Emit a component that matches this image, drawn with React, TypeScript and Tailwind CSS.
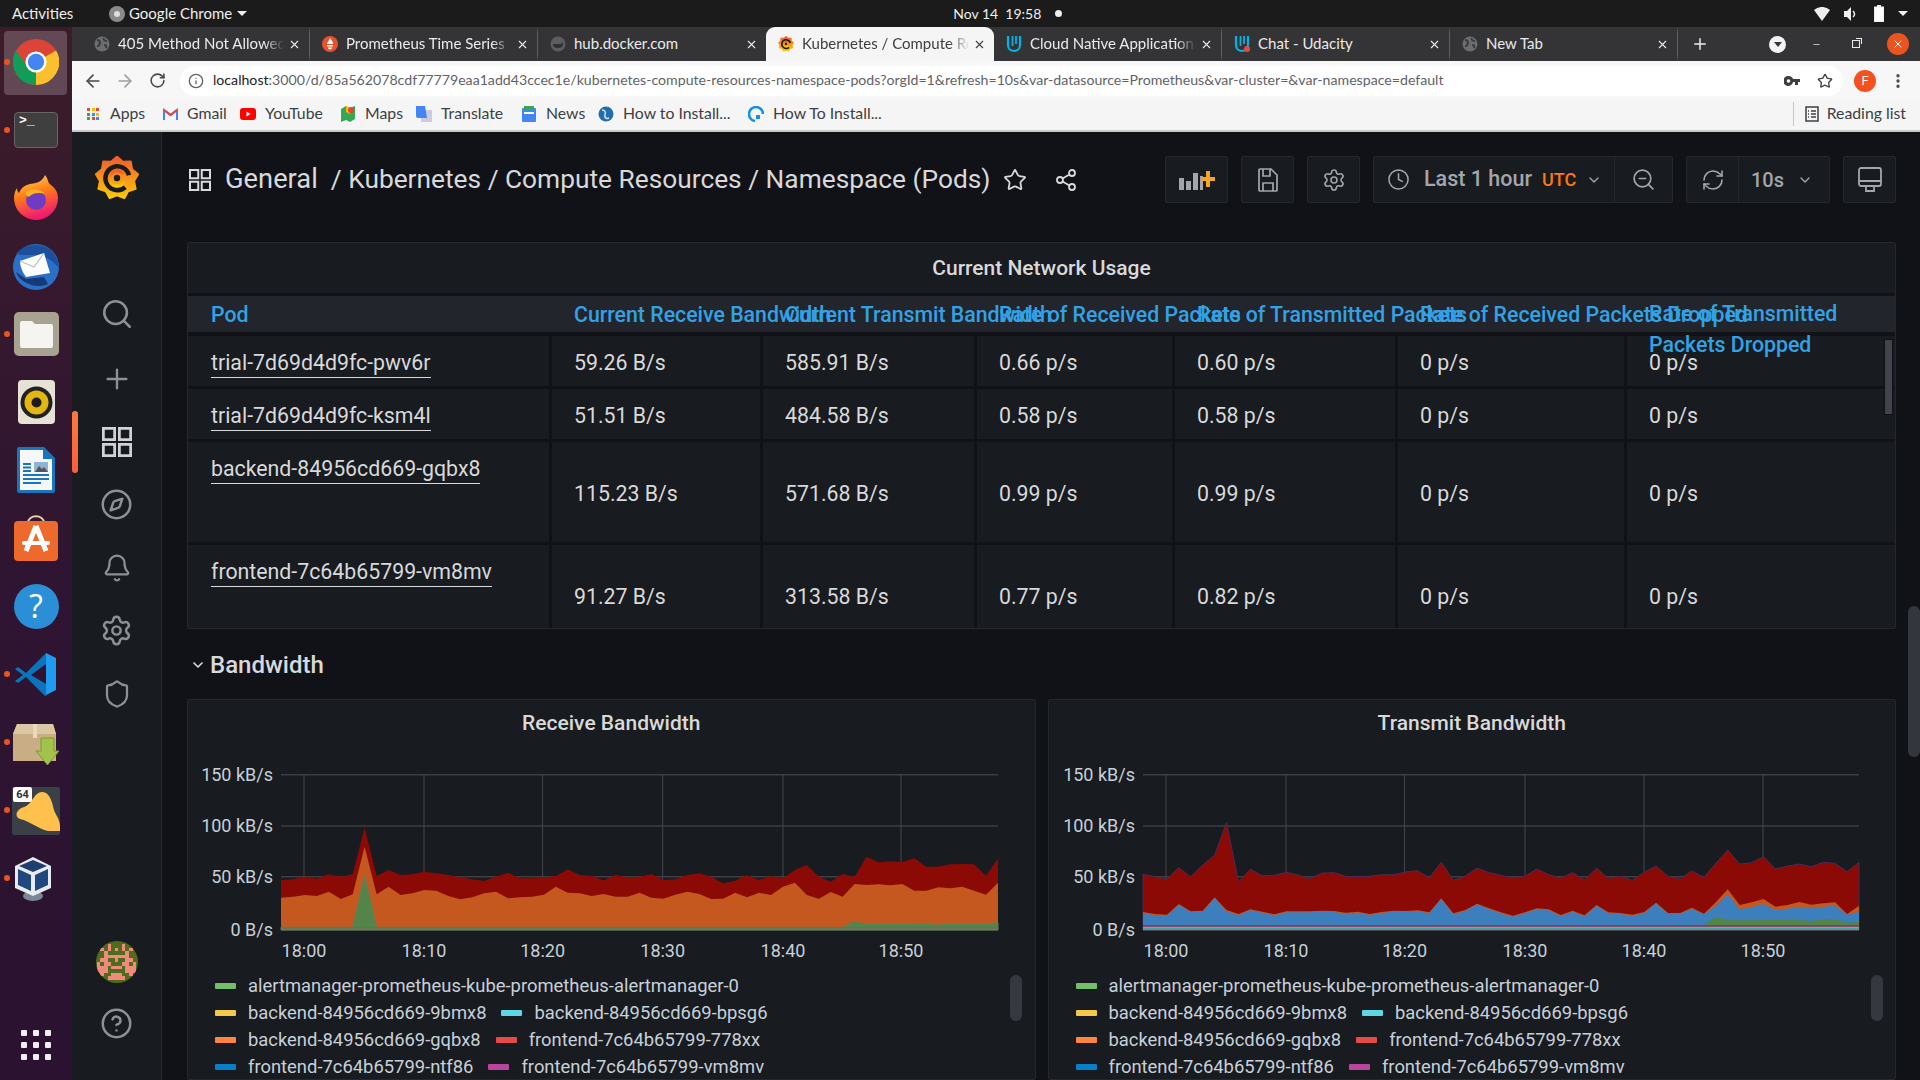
import type { ReactNode } from 'react';
import {
  ArrowLeft, ArrowRight, Bell, ChevronDown, CircleHelp, Clock, Compass, EllipsisVertical, Info,
  Minus, Plus, RefreshCw, RotateCw, Search, Settings, Share2, Shield, Star, X, ZoomOut,
} from 'lucide-react';

// chart values are read off the screenshot, in px from the top of the plot strip
const rxTop = [420,418,410,416,403,410,403,262,408,390,405,403,395,400,405,412,418,423,410,398,415,415,412,408,388,405,408,421,405,412,410,402,420,418,405,400,410,430,422,405,420,408,415,390,375,410,425,402,410,350,367,364,366,355,380,380,373,372,373,407,355];
const rxOrange = [473,470,465,468,455,477,463,320,463,440,465,460,450,452,468,478,472,460,455,475,472,470,464,440,458,460,468,462,470,470,458,473,476,464,455,462,477,476,458,472,458,465,440,428,465,476,456,470,432,435,433,436,432,452,452,442,445,440,452,464,428];
const rxGreenTail = [545,552,552,552,552,551,551,555,550,552,552,552,548];
const rxGreen = Array.from({ length: 61 }, (_, i) => (i === 7 ? 405 : i < 48 ? 562 : rxGreenTail[i - 48]));
const txTop = [403,410,417,383,410,375,346,248,425,388,407,406,397,405,416,399,398,409,410,409,404,404,396,392,413,367,421,408,384,398,406,414,408,387,404,414,398,419,385,415,409,421,397,378,409,416,393,412,370,330,372,368,350,387,378,372,380,367,370,395,367];
const txOrange = [516,522,524,492,514,512,472,510,522,508,515,523,514,514,514,512,513,518,515,522,516,512,513,511,517,475,520,510,491,505,517,527,517,505,508,525,512,526,495,517,519,524,516,488,519,519,503,521,487,448,495,487,477,500,495,486,494,490,487,522,497];
const txBlue = [520,526,527,494,516,516,474,514,526,510,518,526,517,517,517,515,516,521,518,525,519,515,516,514,520,477,523,513,493,508,520,530,520,507,511,528,515,529,497,519,522,527,519,490,521,521,506,523,497,462,508,502,492,510,506,500,505,500,497,524,515];
const txGreenTail = [530,540,541,541,540,539,539,540,543,538,538,548,546];
const txGreen = Array.from({ length: 61 }, (_, i) => (i < 48 ? 556 : txGreenTail[i - 48]));

const rows = [
  { pod: 'trial-7d69d4d9fc-pwv6r', h: 'h-[53px]', tall: false, v: ['59.26 B/s', '585.91 B/s', '0.66 p/s', '0.60 p/s', '0 p/s', '0 p/s'] },
  { pod: 'trial-7d69d4d9fc-ksm4l', h: 'h-[53px]', tall: false, v: ['51.51 B/s', '484.58 B/s', '0.58 p/s', '0.58 p/s', '0 p/s', '0 p/s'] },
  { pod: 'backend-84956cd669-gqbx8', h: 'h-[103px]', tall: true, v: ['115.23 B/s', '571.68 B/s', '0.99 p/s', '0.99 p/s', '0 p/s', '0 p/s'] },
  { pod: 'frontend-7c64b65799-vm8mv', h: 'h-[103px]', tall: true, v: ['91.27 B/s', '313.58 B/s', '0.77 p/s', '0.82 p/s', '0 p/s', '0 p/s'] },
];

const headers = ['Current Receive Bandwidth', 'Current Transmit Bandwidth', 'Rate of Received Packets', 'Rate of Transmitted Packets', 'Rate of Received Packets Dropped'];

const legend = [
  { name: 'alertmanager-prometheus-kube-prometheus-alertmanager-0', color: 'bg-[#73bf69]' },
  { name: 'backend-84956cd669-9bmx8', color: 'bg-[#f2c94c]' },
  { name: 'backend-84956cd669-bpsg6', color: 'bg-[#5fd6e4]' },
  { name: 'backend-84956cd669-gqbx8', color: 'bg-[#ff8540]' },
  { name: 'frontend-7c64b65799-778xx', color: 'bg-[#e84a4a]' },
  { name: 'frontend-7c64b65799-ntf86', color: 'bg-[#0a7fc9]' },
  { name: 'frontend-7c64b65799-vm8mv', color: 'bg-[#b9459f]' },
];

const tabs = [
  { title: '405 Method Not Allowed', icon: <GlobeFav />, fade: true },
  { title: 'Prometheus Time Series', icon: <PromFav />, fade: true },
  { title: 'hub.docker.com', icon: <DockerFav /> },
  { title: 'Kubernetes / Compute Resources', icon: <GrafanaLogo size={16} />, active: true, fade: true },
  { title: 'Cloud Native Application', icon: <UdacityFav />, fade: true },
  { title: 'Chat - Udacity', icon: <UdacityFav dot /> },
  { title: 'New Tab', icon: <GlobeFav /> },
];

function GlobeFav() {
  return (
    <svg width="16" height="16" viewBox="0 0 16 16">
      <circle cx="8" cy="8" r="7.5" fill="#6b6d70" />
      <path d="M3 4c2 0 3 1 3 3s-2 2-2 4M10 2c-1 2 1 3 3 3M10 9c2 0 3 1 2 3" stroke="#3a3b3e" strokeWidth="2" fill="none" />
    </svg>
  );
}

function PromFav() {
  return (
    <svg width="16" height="16" viewBox="0 0 16 16">
      <circle cx="8" cy="8" r="8" fill="#e6522c" />
      <path d="M8 2c1 2 3 3 3 6H5c0-2 2-3 3-6zM5 9h6v1.500H5zM6 11.500h4c0 1-1 2-2 2s-2-1-2-2z" fill="#fff" />
    </svg>
  );
}

function DockerFav() {
  return (
    <svg width="16" height="16" viewBox="0 0 16 16">
      <circle cx="8" cy="8" r="7.500" fill="#5b5d60" />
      <path d="M3 8h8c1 0 1-2 2-2v2c0 3-2 4-5 4S3 11 3 8z" fill="#2f3033" />
    </svg>
  );
}

function UdacityFav({ dot }: { dot?: boolean }) {
  return (
    <svg width="16" height="18" viewBox="0 0 16 18">
      <path d="M2 1v9c0 4 3 6 6 6s6-2 6-6V1" stroke="#02b3e4" strokeWidth="2.200" fill="none" />
      <path d="M6.500 1v10M10 1v8" stroke="#02b3e4" strokeWidth="1.800" fill="none" />
      {dot && <circle cx="13" cy="14" r="3" fill="#e84a3c" />}
    </svg>
  );
}

function gearPath(n: number, outer: number, inner: number) {
  const pts: string[] = [];
  for (let i = 0; i < n * 2; i++) {
    const r = i % 2 ? inner : outer;
    const a = (Math.PI * i) / n - Math.PI / 2;
    pts.push(`${(24 + r * Math.cos(a)).toFixed(1)},${(24 + r * Math.sin(a)).toFixed(1)}`);
  }
  return pts.join(' ');
}

function GrafanaLogo({ size }: { size: number }) {
  const id = `grad${size}`;
  return (
    <svg width={size} height={size} viewBox="0 0 48 48">
      <defs>
        <linearGradient id={id} x1="0" y1="0" x2="0" y2="1">
          <stop offset="0" stopColor="#f15b2a" />
          <stop offset="1" stopColor="#fbca0a" />
        </linearGradient>
      </defs>
      <polygon points={gearPath(9, 23.500, 19)} fill={`url(#${id})`} stroke={`url(#${id})`} strokeWidth="2" strokeLinejoin="round" />
      <path d="M37 21a13 13 0 1 0-4 13" stroke="#181b1f" strokeWidth="5" fill="none" />
      <path d="M31 20a8 8 0 1 0 1 7" stroke={`url(#${id})`} strokeWidth="3.500" fill="none" />
      <circle cx="24" cy="24" r="3.500" fill="#181b1f" />
    </svg>
  );
}

function ChromeLogo({ size }: { size: number }) {
  return (
    <svg width={size} height={size} viewBox="0 0 48 48">
      <circle cx="24" cy="24" r="24" fill="#db4437" />
      <path d="M24 24 45 12A24 24 0 0 1 24 48z" fill="#fbc02d" />
      <path d="M24 24 24 48A24 24 0 0 1 3.200 36z" fill="#0f9d58" />
      <path d="M3.200 36A24 24 0 0 1 3 12l12 17z" fill="#0f9d58" />
      <circle cx="24" cy="24" r="11" fill="#fff" />
      <circle cx="24" cy="24" r="8.500" fill="#4285f4" />
    </svg>
  );
}

function Firefox() {
  return (
    <svg width="46" height="46" viewBox="0 0 46 46">
      <defs>
        <linearGradient id="ffx" x1="0" y1="0" x2="0.300" y2="1">
          <stop offset="0" stopColor="#ffe34d" />
          <stop offset="0.500" stopColor="#ff7a1a" />
          <stop offset="1" stopColor="#f01d6d" />
        </linearGradient>
      </defs>
      <path d="M32 0c4 5 2 7 6 10 5 4 7 8 7 13a22 22 0 1 1-44 0c0-4 1-7 3-10 0 3 1 4 2 5 2-5 6-8 11-9 4-1 11 0 15-9z" fill="url(#ffx)" />
      <circle cx="23" cy="25" r="10" fill="#6f3bc2" />
      <path d="M13 17c6-4 15-3 19 2-6-2-12-1-15 2-2 2-5-1-4-4z" fill="#ffb01f" />
    </svg>
  );
}

function Thunderbird() {
  return (
    <svg width="48" height="48" viewBox="0 0 48 48">
      <circle cx="24" cy="25" r="23" fill="#2a70c9" />
      <path d="M4 12C10 3 26 0 36 6c6 4 11 12 11 20-6-8-16-14-28-13-6 0-11 0-15-1z" fill="#1c4f9c" />
      <path d="M8 19 32 11l6 20-24 4C10 30 8 24 8 19z" fill="#fff" />
      <path d="M8 19 22 25 32 11" stroke="#b9c0c8" strokeWidth="1.200" fill="none" />
      <path d="M4 30c3 10 20 18 32 12l-4-7-18 2z" fill="#163a78" />
    </svg>
  );
}

function Files() {
  return (
    <div className="w-[45px] h-[44px] rounded-[5px] bg-[#a8a290] flex items-center justify-center">
      <svg width="33" height="28" viewBox="0 0 33 28">
        <path d="M0 3a2 2 0 0 1 2-2h10l3 3h16a2 2 0 0 1 2 2v20a2 2 0 0 1-2 2H2a2 2 0 0 1-2-2z" fill="#f6f4f0" />
      </svg>
    </div>
  );
}

function Rhythmbox() {
  return (
    <div className="w-[37px] h-[44px] rounded-[4px] bg-[#e6e2d6] flex items-center justify-center">
      <svg width="33" height="33" viewBox="0 0 33 33">
        <circle cx="16.500" cy="16.500" r="16" fill="#222" />
        <circle cx="16.500" cy="16.500" r="12" fill="#e2b714" />
        <circle cx="16.500" cy="16.500" r="5" fill="#1c1c1c" />
      </svg>
    </div>
  );
}

function Writer() {
  return (
    <svg width="38" height="46" viewBox="0 0 38 46">
      <path d="M2 0h25l11 11v33a2 2 0 0 1-2 2H2a2 2 0 0 1-2-2V2a2 2 0 0 1 2-2z" fill="#1b75bb" />
      <path d="M3 3h23v9h9v31H3z" fill="#f5f7f8" />
      <path d="M6 17h8M6 20.500h8M6 24h8M6 28h26M6 32h26M6 36h18" stroke="#1b75bb" strokeWidth="2" />
      <rect x="17" y="15" width="14" height="10" fill="#8fb5d6" />
      <path d="M18 25l4-6 3 3 2-2 4 5z" fill="#555" />
    </svg>
  );
}

function SoftwareBag() {
  return (
    <svg width="46" height="46" viewBox="0 0 46 46">
      <path d="M15 8c0-9 16-9 16 0" stroke="#e9cfa5" strokeWidth="2" fill="none" />
      <rect x="1" y="6" width="44" height="40" rx="4" fill="#ee6a2c" />
      <path d="M23 11 13 36M23 11l10 25" stroke="#fff" strokeWidth="5" />
      <rect x="9" y="26" width="28" height="4" rx="2" fill="#fff" />
    </svg>
  );
}

function HelpBall() {
  return (
    <div className="w-[45px] h-[45px] rounded-full bg-[#2b8fd8] flex items-center justify-center text-white text-[32px] font-['Open_Sans',sans-serif]">?</div>
  );
}

function VSCode() {
  return (
    <svg width="44" height="44" viewBox="0 0 44 44">
      <path d="M32 1 42 6v32l-10 5z" fill="#1f9cf0" />
      <path d="M32 1 12 21 4 15l-3 2 8 6-8 6 3 2 8-6 20 20V32L17 23 32 12z" fill="#0a75bd" />
    </svg>
  );
}

function PackageBox() {
  return (
    <svg width="46" height="42" viewBox="0 0 46 42" className="mt-[5px]">
      <path d="M4 0h36l3 10v27H0V10z" fill="#c9ae85" />
      <path d="M4 0h36l3 10H0z" fill="#dcc7a3" />
      <rect x="20" y="0" width="4" height="14" fill="#ead9bd" />
      <path d="M28 14h13v13h5L34.500 41 23 27h5z" fill="#a3c24a" stroke="#7b9a2c" />
    </svg>
  );
}

function BellApp() {
  return (
    <div className="relative mt-[2px] w-[48px] h-[48px] rounded-[2px] bg-[#3b3f46] overflow-hidden">
      <svg width="48" height="48" viewBox="0 0 48 48">
        <path d="M30 5c6 0 9 6 11 14 1 8 7 12 7 20v5H36C26 42 18 34 8 32 2 30 4 22 12 20 20 18 22 5 30 5z" fill="#ffc04d" />
      </svg>
      <div className="absolute left-[1px] top-0 w-[19px] h-[15px] rounded-[2px] bg-white text-[#333] text-[11px] leading-[15px] font-bold text-center">64</div>
    </div>
  );
}

function VBox() {
  return (
    <svg width="40" height="46" viewBox="0 0 40 46" className="-ml-[6px] mt-[1px]">
      <ellipse cx="20" cy="40" rx="10" ry="5" fill="#7b8796" />
      <path d="M20 1 38 10v22L20 40 2 32V10z" fill="#e8ecf2" />
      <path d="M20 4 34 10 20 16 6 10z" fill="#1d3f70" />
      <path d="M5 13 18 19v16L5 29zM35 13 22 19v16l13-6z" fill="#1f4880" />
    </svg>
  );
}

function DockSlot({ children, dot, active }: { children: ReactNode; dot?: boolean; active?: boolean }) {
  return (
    <div className="relative h-[68px] shrink-0 flex items-center justify-center">
      {active && <div className="absolute left-[4px] top-[3px] w-[63px] h-[64px] rounded-[4px] bg-white/20" />}
      {dot && <div className="absolute left-[4px] top-[31px] w-[6px] h-[6px] rounded-full bg-[#e95420]" />}
      <div className="relative">{children}</div>
    </div>
  );
}

function Dock() {
  return (
    <div className="w-[72px] shrink-0 flex flex-col pt-[1px] bg-gradient-to-b from-[#3c1c29] via-[#2f1531] to-[#2a1230]">
      <DockSlot active dot><ChromeLogo size={46} /></DockSlot>
      <DockSlot dot>
        <div className="w-[44px] h-[36px] rounded-[4px] bg-[#3f3f3f] border border-[#666] text-white text-[13px] leading-[14px] pl-[4px] pt-[1px] font-['Liberation_Mono',monospace] font-bold">&gt;_</div>
      </DockSlot>
      <DockSlot><Firefox /></DockSlot>
      <DockSlot><Thunderbird /></DockSlot>
      <DockSlot dot><Files /></DockSlot>
      <DockSlot><Rhythmbox /></DockSlot>
      <DockSlot><Writer /></DockSlot>
      <DockSlot><SoftwareBag /></DockSlot>
      <DockSlot><HelpBall /></DockSlot>
      <DockSlot dot><VSCode /></DockSlot>
      <DockSlot dot><PackageBox /></DockSlot>
      <DockSlot dot><BellApp /></DockSlot>
      <DockSlot dot><VBox /></DockSlot>
      <div className="mt-auto mb-[20px] mx-auto grid grid-cols-3 gap-x-[6px] gap-y-[6px]">
        {Array.from({ length: 9 }).map((_, i) => (
          <div key={i} className="w-[6px] h-[6px] rounded-[1px] bg-[#f0eeee]" />
        ))}
      </div>
    </div>
  );
}

function TopBar() {
  return (
    <div className="h-[27px] shrink-0 bg-[#1b1b1b] flex items-center text-[#eeeeec] text-[15px] font-['Lato',sans-serif]">
      <span className="ml-[12px] w-[97px]">Activities</span>
      <svg width="16" height="16" viewBox="0 0 16 16"><circle cx="8" cy="8" r="8" fill="#8a8a8a" /><circle cx="8" cy="8" r="3" fill="#ddd" /></svg>
      <span className="ml-[4px]">Google Chrome</span>
      <span className="ml-[5px] w-0 h-0 border-x-[5px] border-x-transparent border-t-[5px] border-t-[#eeeeec]" />
      <span className="ml-[706px] text-[14px]">Nov 14&nbsp;&nbsp;19:58</span>
      <span className="ml-[14px] w-[7px] h-[7px] rounded-full bg-[#eeeeec]" />
      <svg className="ml-[752px]" width="16" height="14" viewBox="0 0 16 14"><path d="M0 3a12 12 0 0 1 16 0L8 14z" fill="#eee" /></svg>
      <svg className="ml-[14px]" width="13" height="14" viewBox="0 0 13 14"><path d="M0 4h3l4-4v14l-4-4H0z" fill="#eee" /><path d="M9 4c2 2 2 4 0 6" stroke="#eee" strokeWidth="1.500" fill="none" /></svg>
      <svg className="ml-[17px]" width="10" height="17" viewBox="0 0 10 17"><rect x="3" y="0" width="4" height="2" fill="#eee" /><rect x="0.500" y="2" width="9" height="14.500" fill="#fff" stroke="#eee" /></svg>
      <span className="ml-[14px] w-0 h-0 border-x-[5px] border-x-transparent border-t-[5px] border-t-[#eeeeec]" />
    </div>
  );
}

function TabStrip() {
  return (
    <div className="h-[34px] shrink-0 bg-[#343436] flex items-center pl-[10px] text-[15px] font-['Lato',sans-serif]">
      {tabs.map((t, i) => {
        const noSep = t.active || i === 2;
        return (
          <div
            key={t.title}
            className={`w-[228px] h-full shrink-0 flex items-center pl-[12px] pr-[8px] ${t.active ? 'bg-[#f5f5f5] rounded-t-[9px] text-[#3c4043]' : 'text-[#e8eaed]'} ${noSep ? '' : 'border-r border-r-[#5f6063] border-y-[6px] border-y-[#343436]'}`}
          >
            <span className="w-[16px] flex justify-center shrink-0">{t.icon}</span>
            <span className={`ml-[8px] pb-[2px] flex-1 whitespace-nowrap overflow-hidden ${t.fade ? '[mask-image:linear-gradient(to_right,black_88%,transparent)]' : ''}`}>{t.title}</span>
            <X size={13} strokeWidth={2} className="ml-[4px] shrink-0" />
          </div>
        );
      })}
      <Plus size={18} strokeWidth={2} className="ml-[13px] text-[#e8eaed]" />
      <div className="ml-[60px] w-[17px] h-[17px] rounded-full bg-[#f1f3f4] flex items-center justify-center">
        <span className="w-0 h-0 border-x-[4px] border-x-transparent border-t-[5px] border-t-[#35363a]" />
      </div>
      <Minus size={9} strokeWidth={2} className="ml-[26px] text-[#e8eaed]" />
      <div className="ml-[31px] relative w-[8px] h-[8px] border border-[#e8eaed]">
        <div className="absolute -top-[3px] -right-[3px] w-[6px] h-[6px] border-t border-r border-[#e8eaed]" />
      </div>
      <div className="ml-[27px] w-[22px] h-[22px] rounded-full bg-[#e95420] text-white flex items-center justify-center"><X size={12} /></div>
    </div>
  );
}

function AddressBar() {
  return (
    <div className="h-[39px] shrink-0 bg-[#f7f7f7] flex items-center text-[#45494d]">
      <ArrowLeft size={20} strokeWidth={2} className="ml-[11px]" />
      <ArrowRight size={20} strokeWidth={2} className="ml-[12px] text-[#9aa0a6]" />
      <RotateCw size={17} strokeWidth={2.200} className="ml-[14px]" />
      <div className="ml-[14px] w-[1663px] h-[30px] rounded-full bg-white flex items-center">
        <Info size={16} className="ml-[8px] text-[#5f6368]" />
        <div className="ml-[9px] pb-[2px] text-[14.150px] whitespace-nowrap font-['Lato',sans-serif] text-[#5f6368]">
          <span className="text-[#202124]">localhost</span>:3000/d/85a562078cdf77779eaa1add43ccec1e/kubernetes-compute-resources-namespace-pods?orgId=1&amp;refresh=10s&amp;var-datasource=Prometheus&amp;var-cluster=&amp;var-namespace=default
        </div>
        <svg width="16" height="10" viewBox="0 0 16 10" className="ml-auto">
          <path d="M4.500 0a5 5 0 0 1 4.600 3H16v3h-2v3h-3V6H9.100A5 5 0 1 1 4.500 0zm0 3.200a1.800 1.800 0 1 0 0 3.600 1.800 1.800 0 0 0 0-3.600z" fill="#3c4043" />
        </svg>
        <Star size={16} className="ml-[17px] mr-[10px] text-[#3c4043]" />
      </div>
      <div className="ml-[11px] w-[22px] h-[22px] rounded-full bg-[#f4511e] text-white text-[13px] flex items-center justify-center">F</div>
      <EllipsisVertical size={18} strokeWidth={2.500} className="ml-[13px]" />
    </div>
  );
}

function BookmarkItem({ icon, label, width }: { icon: ReactNode; label: string; width: string }) {
  return (
    <div className={`flex items-center shrink-0 ${width}`}>
      <span className="w-[16px] flex justify-center shrink-0">{icon}</span>
      <span className="ml-[9px] pb-[2px] whitespace-nowrap">{label}</span>
    </div>
  );
}

function Bookmarks() {
  return (
    <div className="h-[32px] shrink-0 bg-[#f5f5f5] border-b-2 border-[#c9c9cb] flex items-center pl-[13px] pb-[2px] text-[15.800px] text-[#3c4043] font-['Lato',sans-serif]">
      <BookmarkItem width="w-[77px]" label="Apps" icon={
        <span className="grid grid-cols-3 gap-[1.500px]">
          {['#ea4335', '#fbbc04', '#ea4335', '#34a853', '#4285f4', '#fbbc04', '#34a853', '#ea4335', '#4285f4'].map((c, i) => (
            <span key={i} className="w-[3px] h-[3px]" style={{ background: c }} />
          ))}
        </span>
      } />
      <BookmarkItem width="w-[78px]" label="Gmail" icon={
        <svg width="15" height="12" viewBox="0 0 15 12"><path d="M1 12V2l6.500 5L14 2v10" stroke="#4285f4" strokeWidth="2" fill="none" /><path d="M1 2l6.500 5L14 2" stroke="#ea4335" strokeWidth="2" fill="none" /></svg>
      } />
      <BookmarkItem width="w-[100px]" label="YouTube" icon={
        <svg width="16" height="12" viewBox="0 0 16 12"><rect width="16" height="12" rx="3" fill="#f00" /><path d="M6.500 3.500v5l4-2.500z" fill="#fff" /></svg>
      } />
      <BookmarkItem width="w-[76px]" label="Maps" icon={
        <svg width="14" height="16" viewBox="0 0 14 16"><path d="M0 3l5-3 4 2 5-2v13l-5 3-4-2-5 2z" fill="#34a853" /><path d="M5 0l4 2v6L5 6z" fill="#fbbc04" /><circle cx="10" cy="4" r="3" fill="#ea4335" /></svg>
      } />
      <BookmarkItem width="w-[105px]" label="Translate" icon={
        <svg width="16" height="16" viewBox="0 0 16 16"><rect x="5" y="4" width="11" height="12" fill="#ccd" /><path d="M0 0h9l2 12H2a2 2 0 0 1-2-2z" fill="#4285f4" /></svg>
      } />
      <BookmarkItem width="w-[77px]" label="News" icon={
        <svg width="14" height="16" viewBox="0 0 14 16"><rect y="2" width="14" height="14" rx="1" fill="#4285f4" /><rect x="2" y="0" width="10" height="4" fill="#34a853" /><rect x="2" y="6" width="10" height="2" fill="#fff" /></svg>
      } />
      <BookmarkItem width="w-[150px]" label="How to Install..." icon={
        <svg width="16" height="16" viewBox="0 0 16 16"><circle cx="8" cy="8" r="7.500" fill="#1f6fb0" /><path d="M4 4c3 0 4 2 3 5s2 4 4 3" stroke="#ddd" strokeWidth="1.500" fill="none" /></svg>
      } />
      <BookmarkItem width="w-[141px]" label="How To Install..." icon={
        <svg width="16" height="16" viewBox="0 0 16 16"><path d="M7 15A7 7 0 1 1 15 8" stroke="#0f8ff0" strokeWidth="2.500" fill="none" /><path d="M8 9h4v4H8z" fill="#0f8ff0" /></svg>
      } />
      <div className="ml-auto h-[24px] border-l border-[#c6c6c8] flex items-center pl-[11px] pr-[14px]">
        <svg width="14" height="16" viewBox="0 0 14 16"><rect x="1" y="1" width="12" height="14" fill="none" stroke="#3c4043" strokeWidth="1.500" /><path d="M3 5h1M6 5h5M3 8h1M6 8h5M3 11h1M6 11h5" stroke="#3c4043" strokeWidth="1.300" /></svg>
        <span className="ml-[8px] pb-[2px] whitespace-nowrap">Reading list</span>
      </div>
    </div>
  );
}

function SideIcon({ children }: { children: ReactNode }) {
  return <div className="h-[63px] shrink-0 flex items-center justify-center text-[#8e9096]">{children}</div>;
}

function GrafanaGrid({ size, className }: { size: number; className?: string }) {
  return (
    <svg width={size} height={size} viewBox="0 0 24 24" className={className} fill="none" stroke="currentColor" strokeWidth="2.200">
      <rect x="1.100" y="1.100" width="9" height="9" />
      <rect x="13.900" y="1.100" width="9" height="9" />
      <rect x="1.100" y="13.900" width="9" height="9" />
      <rect x="13.900" y="13.900" width="9" height="9" />
    </svg>
  );
}

function Avatar() {
  const cells = ['...#...#...', '.#.#.#.#.#.', '..#.....#..', '..#######..', '.##..#..##.', '#.##...##.#', '###.###.###', '###.....###', '.#..###..#.', '...#####...'];
  return (
    <div className="w-[42px] h-[42px] rounded-full overflow-hidden bg-[#4f6b1c] pt-[3px]">
      {cells.map((r, y) => (
        <div key={y} className="flex h-[3.600px] justify-center">
          {r.split('').map((c, x) => (
            <span key={x} className={`w-[3.600px] h-full ${c === '#' ? 'bg-[#f08a7c]' : ''}`} />
          ))}
        </div>
      ))}
    </div>
  );
}

function SideMenu() {
  return (
    <div className="relative w-[90px] shrink-0 bg-[#181b1f] border-r border-[#25282d] flex flex-col">
      <div className="h-[150px] shrink-0 pt-[24px] flex justify-center">
        <GrafanaLogo size={44} />
      </div>
      <SideIcon><Search size={34} strokeWidth={1.800} /></SideIcon>
      <div className="h-[2px] shrink-0" />
      <SideIcon><Plus size={32} strokeWidth={1.800} /></SideIcon>
      <SideIcon><GrafanaGrid size={30} className="text-[#d0d1d9]" /></SideIcon>
      <SideIcon><Compass size={33} strokeWidth={1.800} /></SideIcon>
      <SideIcon><Bell size={30} strokeWidth={1.800} /></SideIcon>
      <SideIcon><Settings size={33} strokeWidth={1.800} /></SideIcon>
      <SideIcon><Shield size={30} strokeWidth={1.800} /></SideIcon>
      <div className="mt-auto flex flex-col items-center pb-[40px]">
        <Avatar />
        <CircleHelp size={33} strokeWidth={1.800} className="mt-[24px] text-[#8e9096]" />
      </div>
      <div className="absolute -left-0 top-[279px] w-[6px] h-[62px] rounded-[3px] bg-gradient-to-b from-[#ff7941] to-[#f55f3e]" />
    </div>
  );
}

function ToolButton({ children, className }: { children: ReactNode; className?: string }) {
  return (
    <div className={`h-[47px] shrink-0 rounded-[2px] bg-[#181b1f] border border-[#24272c] flex items-center justify-center text-[#a4a6ab] ${className ?? ''}`}>
      {children}
    </div>
  );
}

function DashHeader() {
  return (
    <div className="h-[47px] flex items-center">
      <GrafanaGrid size={22} className="ml-[2px] text-[#d8d9da]" />
      <span className="ml-[14px] text-[27.300px] text-[#d8d9da] whitespace-nowrap">General</span>
      <span className="ml-[13px] text-[26.300px] text-[#d8d9da] whitespace-nowrap">/ Kubernetes / Compute Resources / Namespace (Pods)</span>
      <Star size={24} strokeWidth={1.800} className="ml-[12px] text-[#d8d9da]" />
      <Share2 size={24} strokeWidth={1.800} className="ml-[27px] text-[#d8d9da]" />
      <ToolButton className="ml-auto w-[63px]">
        <svg width="36" height="24" viewBox="0 0 36 24">
          <path d="M0 10h5v12H0zM7 13h5v9H7zM14 5h5v17h-5zM21 8h3v14h-3z" fill="#a4a6ab" />
          <path d="M27 3h4v6h5v4h-5v6h-4v-6h-4V9h4z" fill="#f5a623" />
        </svg>
      </ToolButton>
      <ToolButton className="ml-[13px] w-[53px]">
        <svg width="20" height="24" viewBox="0 0 20 24" fill="none" stroke="currentColor" strokeWidth="1.700">
          <path d="M2 1h11l6 6v15a1 1 0 0 1-1 1H2a1 1 0 0 1-1-1V2a1 1 0 0 1 1-1z" />
          <path d="M5 1v7h7V1M5 23v-8h10v8" />
        </svg>
      </ToolButton>
      <ToolButton className="ml-[13px] w-[53px]"><Settings size={24} strokeWidth={1.600} /></ToolButton>
      <ToolButton className="ml-[13px] w-[300px] !justify-start">
        <Clock size={23} strokeWidth={1.600} className="ml-[13px]" />
        <span className="ml-[14px] text-[21.500px] font-medium whitespace-nowrap">Last 1 hour</span>
        <span className="ml-[10px] text-[18px] font-medium text-[#ff780a]">UTC</span>
        <ChevronDown size={16} className="ml-[10px]" />
        <div className="ml-[12px] h-full border-l border-[#24272c] flex-1 flex items-center justify-center">
          <ZoomOut size={25} strokeWidth={1.600} />
        </div>
      </ToolButton>
      <ToolButton className="ml-[13px] w-[144px] !justify-start">
        <div className="w-[52px] h-full border-r border-[#24272c] flex items-center justify-center">
          <RefreshCw size={24} strokeWidth={1.600} />
        </div>
        <span className="ml-[12px] text-[20px] font-medium">10s</span>
        <ChevronDown size={16} className="ml-[13px]" />
      </ToolButton>
      <ToolButton className="ml-[13px] w-[53px]">
        <svg width="24" height="26" viewBox="0 0 24 26" fill="none" stroke="currentColor" strokeWidth="1.800">
          <rect x="1" y="1" width="22" height="18" rx="2" />
          <path d="M1 14h22M8 19v5h8v-5" />
        </svg>
      </ToolButton>
    </div>
  );
}

function NetworkTable() {
  const cols = 'grid grid-cols-[364px_211px_214px_198px_223px_229px_1fr]';
  return (
    <div className="relative mt-[39px] h-[387px] rounded-[2px] bg-[#181b1f] border border-[#24272c] overflow-hidden">
      <div className="h-[50px] pt-[1px] flex items-center justify-center text-[21px] font-medium text-[#d8d9da]">Current Network Usage</div>
      <div className="h-[3px] bg-[#111217]" />
      <div className={`${cols} grid-rows-[36px] h-[36px] bg-[#22252b] text-[21.300px] leading-[31px] font-medium text-[#33a2e5]`}>
        <div className="pl-[23px] self-center">Pod</div>
        {headers.map((h) => (
          <div key={h} className="pl-[22px] self-center whitespace-nowrap">{h}</div>
        ))}
        <div className="relative z-10 pl-[22px] pt-[2px] self-start h-[36px] w-[240px]">Rate of Transmitted Packets Dropped</div>
      </div>
      <div className="h-[4px] bg-[#111217]" />
      {rows.map((r) => (
        <div key={r.pod} className={`${cols} ${r.h} border-b-[3px] border-[#111217] text-[21.300px] text-[#d8d9da]`}>
          <div className={`flex border-r-[3px] border-[#111217] pl-[23px] ${r.tall ? 'items-start pt-[13px]' : 'items-center pt-[4px]'}`}>
            <span className="border-b border-[#d8d9da] pb-[1px] leading-[27px]">{r.pod}</span>
          </div>
          {r.v.map((v, i) => (
            <div key={i} className={`flex items-center pl-[22px] pt-[3px] ${i < 5 ? 'border-r-[3px] border-[#111217]' : ''}`}>{v}</div>
          ))}
        </div>
      ))}
      <div className="absolute right-[2px] top-[96px] w-[9px] h-[76px] bg-[#41444c] border border-[#111217]" />
    </div>
  );
}

function Chart({ left, right, ticks, series, lines }: {
  left: number;
  right: number;
  ticks: number[];
  series: { data: number[]; color: string; stroke?: string }[];
  lines: { y: number; color: string }[];
}) {
  const step = (right - left) / 60;
  const pts = (d: number[]) => d.map((v, i) => `${(left + i * step).toFixed(1)},${(v / 3 - 20).toFixed(1)}`).join(' ');
  const floor = 570 / 3 - 20;
  const labels = ['18:00', '18:10', '18:20', '18:30', '18:40', '18:50'];
  const yTicks = [{ y: 104, t: '150 kB/s' }, { y: 258, t: '100 kB/s' }, { y: 410, t: '50 kB/s' }, { y: 570, t: '0 B/s' }];
  return (
    <svg width="848" height="212" className="block" style={{ fontFamily: 'Roboto, sans-serif' }}>
      {yTicks.map((t) => (
        <line key={t.t} x1={left} x2={right} y1={t.y / 3 - 20} y2={t.y / 3 - 20} stroke="#3b3e43" strokeWidth="1.500" />
      ))}
      {ticks.map((x) => (
        <line key={x} x1={x} x2={x} y1={104 / 3 - 20} y2={floor} stroke="#44474c" strokeWidth="1" />
      ))}
      {series.map((s) => (
        <polygon
          key={s.color}
          points={`${left},${floor} ${pts(s.data)} ${right},${floor}`}
          fill={s.color}
          stroke={s.stroke}
          strokeWidth={s.stroke ? 1 : 0}
        />
      ))}
      {lines.map((l) => (
        <line key={l.y + l.color} x1={left} x2={right} y1={l.y / 3 - 20} y2={l.y / 3 - 20} stroke={l.color} strokeWidth="1.200" />
      ))}
      {yTicks.map((t) => (
        <text key={t.t} x={left - 8} y={t.y / 3 - 20 + 6} textAnchor="end" fontSize="18" fill="#c7d0d9">{t.t}</text>
      ))}
      {ticks.map((x, i) => (
        <text key={x} x={x} y={197} textAnchor="middle" fontSize="18" fill="#c7d0d9">{labels[i]}</text>
      ))}
    </svg>
  );
}

function Legend() {
  return (
    <div className="relative ml-[27px] w-[800px] flex flex-wrap text-[18.400px] leading-[27px] text-[#c7d0d9]">
      {legend.map((l) => (
        <div key={l.name} className="flex items-center mr-[15px] whitespace-nowrap">
          <span className={`w-[21px] h-[6px] rounded-[1px] ${l.color}`} />
          <span className="ml-[12px]">{l.name}</span>
        </div>
      ))}
    </div>
  );
}

function GraphPanel({ title, children, barClass }: { title: string; children: ReactNode; barClass: string }) {
  return (
    <div className="relative h-[381px] rounded-[2px] bg-[#181b1f] border border-[#24272c] flex-1 min-w-0">
      <div className="h-[60px] pb-[12px] flex items-center justify-center text-[21px] font-medium text-[#d8d9da]">{title}</div>
      {children}
      <Legend />
      <div className={`absolute top-[275px] w-[12px] h-[46px] rounded-full bg-[#35383e] ${barClass}`} />
    </div>
  );
}

export default function App() {
  return (
    <div className="w-[1920px] h-[1080px] overflow-hidden flex flex-col bg-[#111217] font-['Roboto',sans-serif]">
      <TopBar />
      <div className="flex-1 min-h-0 flex">
        <Dock />
        <div className="flex-1 min-w-0 flex flex-col">
          <TabStrip />
          <AddressBar />
          <Bookmarks />
          <div className="relative flex-1 min-h-0 flex">
            <SideMenu />
            <div className="flex-1 min-w-0 pl-[25px] pr-[24px] pt-[24px] overflow-hidden">
              <DashHeader />
              <NetworkTable />
              <div className="h-[70px] pt-[1px] flex items-center">
                <ChevronDown size={16} strokeWidth={2.500} className="ml-[3px] text-[#d8d9da]" />
                <span className="ml-[4px] text-[24px] font-medium text-[#d8d9da]">Bandwidth</span>
              </div>
              <div className="flex gap-[12px]">
                <GraphPanel title="Receive Bandwidth" barClass="left-[822px]">
                  <Chart
                    left={93}
                    right={810}
                    ticks={[116, 236, 354.600, 474.700, 595, 713]}
                    series={[
                      { data: rxTop, color: '#8b0a05' },
                      { data: rxOrange, color: '#c4581f' },
                      { data: rxGreen, color: '#53844a', stroke: '#6b7b58' },
                    ]}
                    lines={[
                      { y: 564, color: '#4a6f8f' },
                      { y: 567, color: '#7f7a3c' },
                    ]}
                  />
                </GraphPanel>
                <GraphPanel title="Transmit Bandwidth" barClass="left-[822px]">
                  <Chart
                    left={94}
                    right={810}
                    ticks={[117, 237, 355.600, 476, 595, 714]}
                    series={[
                      { data: txTop, color: '#8b0a05', stroke: '#4b2a55' },
                      { data: txOrange, color: '#c4581f' },
                      { data: txBlue, color: '#3c7fbc' },
                      { data: txGreen, color: '#53844a' },
                    ]}
                    lines={[
                      { y: 557, color: '#5b4f7a' },
                      { y: 560, color: '#8a4a6a' },
                      { y: 563, color: '#c9953c' },
                      { y: 566, color: '#4aa0a8' },
                      { y: 569, color: '#8a8a4a' },
                    ]}
                  />
                </GraphPanel>
              </div>
            </div>
            <div className="absolute right-0 top-[474px] w-[12px] h-[151px] rounded-full bg-[#33363c]" />
          </div>
        </div>
      </div>
    </div>
  );
}
